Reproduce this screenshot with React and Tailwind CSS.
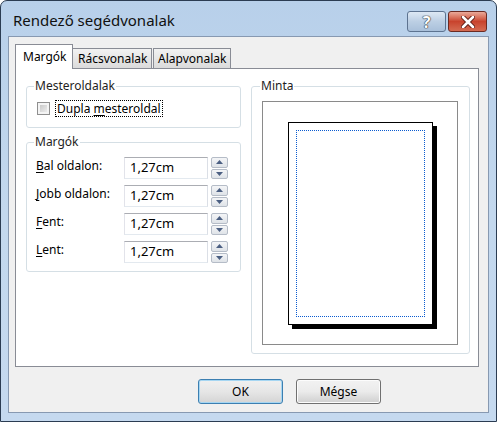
import React from "react";

const font = { fontFamily: '"Noto Sans", "Open Sans", sans-serif' };

function Spinner() {
  return (
    <div className="flex flex-col gap-[1px] w-[17px] h-[22px]">
      {[0, 1].map((i) => (
        <div
          key={i}
          className="flex-1 flex items-center justify-center border border-[#b5bcc7] rounded-[2px] bg-gradient-to-b from-[#f4f5f7] to-[#dfe3e8]"
        >
          <svg width="7" height="4" viewBox="0 0 7 4">
            {i === 0 ? (
              <path d="M0 4 L3.5 0 L7 4 Z" fill="#4b5f82" />
            ) : (
              <path d="M0 0 L3.5 4 L7 0 Z" fill="#4b5f82" />
            )}
          </svg>
        </div>
      ))}
    </div>
  );
}

function MarginRow({ hot, rest }) {
  return (
    <div className="flex items-center h-[22px]">
      <span className="w-[88px] leading-none pb-[4px]">
        <span className="underline underline-offset-2">{hot}</span>
        {rest}
      </span>
      <div className="w-[84px] h-[22px] border border-[#abadb3] border-l-[#e2e3ea] border-r-[#dbdfe6] border-b-[#e3e9ef] bg-white flex items-center pl-[5px] text-[13px]">
        1,27cm
      </div>
      <div className="ml-[3px]">
        <Spinner />
      </div>
    </div>
  );
}

function Legend({ children }) {
  return <legend className="ml-[-2px] px-[1px] leading-[16px] text-[#1e1e1e]">{children}</legend>;
}

export default function App() {
  return (
    <div
      className="w-[497px] h-[422px] flex flex-col border border-[#2b3c52] rounded-t-[7px] bg-gradient-to-b from-[#b8d0ea] via-[#c3d8ee] to-[#c5d9ef] text-[12px] text-black overflow-hidden"
      style={font}
    >
      <div className="h-[35px] flex items-start justify-between pl-[12px] pr-[9px]">
        <div className="text-[15px] pt-[8px] text-[#101010]">Rendező segédvonalak</div>
        <div className="flex gap-[2px] pt-[10px]">
          <div className="w-[39px] h-[21px] rounded-[3px] border border-[#5d7390] bg-gradient-to-b from-[#dde8f4] via-[#bccfe4] to-[#a9c0da] flex items-center justify-center">
            <span
              className="text-[16px] font-bold text-white leading-none"
              style={{ textShadow: "0 0 1px #333, 0 0 1px #333, 0 0 1px #333" }}
            >
              ?
            </span>
          </div>
          <div className="w-[39px] h-[21px] rounded-[3px] border border-[#6b2a22] bg-gradient-to-b from-[#e9a999] via-[#c8432d] to-[#d46b52] flex items-center justify-center">
            <svg width="14" height="12" viewBox="0 0 14 12">
              <path d="M2 1 L12 11 M12 1 L2 11" stroke="#5a1a12" strokeWidth="4.5" strokeLinecap="round" />
              <path d="M2 1 L12 11 M12 1 L2 11" stroke="#ffffff" strokeWidth="2.6" strokeLinecap="round" />
            </svg>
          </div>
        </div>
      </div>

      <div className="ml-[7px] w-[481px] h-[377px] border border-[#8799b1] bg-[#f0f0f0] flex flex-col pl-[6px] pt-[6px]">
        <div className="flex items-end h-[25px]">
          <div className="w-[58px] h-[25px] -mb-px border border-b-0 border-[#898c95] bg-white relative z-10 pl-[7px] pt-[3px]">
            Margók
          </div>
          <div className="w-[79px] h-[20px] border border-l-0 border-b-0 border-[#898c95] bg-gradient-to-b from-[#f2f2f2] to-[#dbdbdb] pl-[5px] leading-[19px]">
            Rácsvonalak
          </div>
          <div className="ml-[1px] w-[78px] h-[20px] border border-b-0 border-[#898c95] bg-gradient-to-b from-[#f2f2f2] to-[#dbdbdb] pl-[4px] leading-[19px]">
            Alapvonalak
          </div>
        </div>

        <div className="w-[464px] h-[299px] border border-[#898c95] bg-white flex gap-[10px] pl-[10px] pt-[9px]">
          <div className="w-[215px] flex flex-col">
            <fieldset className="border border-[#d5dfe5] rounded-[3px] pl-[9px] pt-[5px] pb-[10px]">
              <Legend>Mesteroldalak</Legend>
              <div className="flex items-center h-[18px] pl-[1px]">
                <div className="w-[13px] h-[13px] border border-[#8f8f8f] bg-[#f4f4f4] p-[2px]">
                  <div className="w-full h-full bg-gradient-to-br from-[#c9c9c9] to-[#ededed]" />
                </div>
                <span className="ml-[5px] border border-dotted border-black px-[1px] leading-[15px]">
                  Dupla <span className="underline underline-offset-2">m</span>esteroldal
                </span>
              </div>
            </fieldset>

            <fieldset className="mt-[6px] border border-[#d5dfe5] rounded-[3px] pl-[9px] pt-[7px] pb-[8px]">
              <Legend>Margók</Legend>
              <div className="flex flex-col gap-[6px]">
                <MarginRow hot="B" rest="al oldalon:" />
                <MarginRow hot="J" rest="obb oldalon:" />
                <MarginRow hot="F" rest="ent:" />
                <MarginRow hot="L" rest="ent:" />
              </div>
            </fieldset>
          </div>

          <fieldset className="w-[219px] self-start border border-[#d5dfe5] rounded-[3px] pl-[10px] pt-[7px] pb-[8px]">
            <Legend>Minta</Legend>
            <div className="w-[196px] h-[244px] border border-[#8a8a8a] bg-white flex items-center justify-center">
              <div className="w-[145px] h-[203px] border border-black bg-white shadow-[4px_4px_0_#000] p-[7px]">
                <div className="w-full h-full border border-dotted border-[#0a5bd0]" />
              </div>
            </div>
          </fieldset>
        </div>

        <div className="flex justify-end gap-[13px] pr-[107px] mt-[12px]">
          <button className="w-[85px] h-[25px] rounded-[3px] border border-[#3c7fb1] bg-gradient-to-b from-[#f0f0f0] via-[#e6e6e6] to-[#d4d4d4] shadow-[inset_0_0_0_1px_#a6d6f2] text-[12px]">
            OK
          </button>
          <button className="w-[85px] h-[25px] rounded-[3px] border border-[#707070] bg-gradient-to-b from-[#f2f2f2] via-[#ebebeb] to-[#cfcfcf] shadow-[inset_0_0_0_1px_#fcfcfc] text-[12px]">
            Mégse
          </button>
        </div>
      </div>
    </div>
  );
}
